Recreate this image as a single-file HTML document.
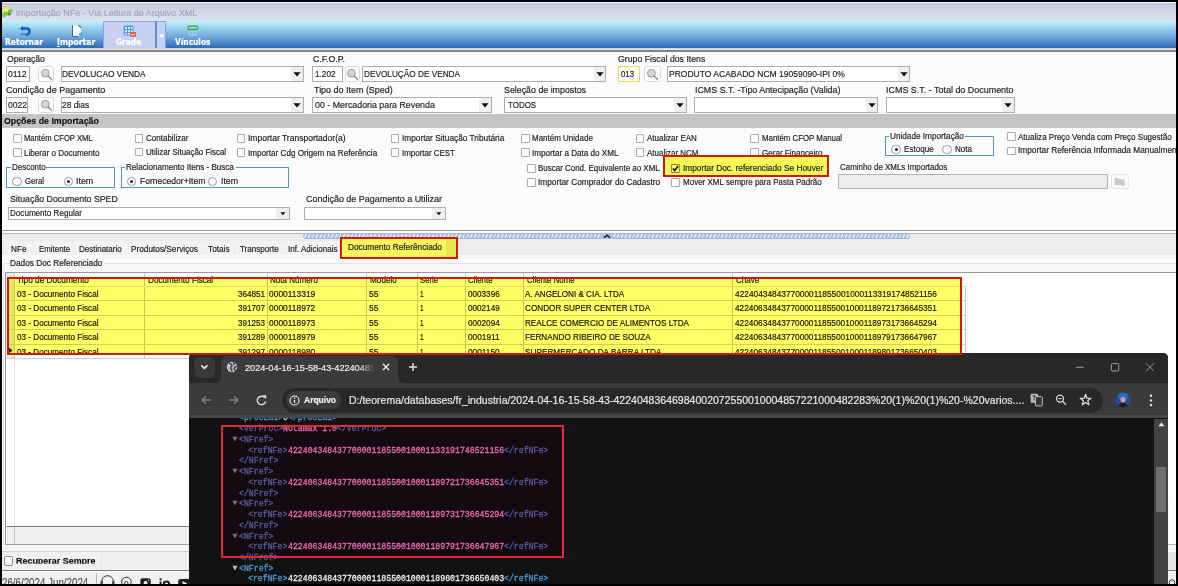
<!DOCTYPE html>
<html lang="pt-BR"><head><meta charset="utf-8"><title>Importação NFe - Via Leitura de Arquivo XML</title>
<style>
html,body{margin:0;padding:0;background:#000}
#root{position:relative;width:1178px;height:586px;overflow:hidden;background:#000}
#root div,#root span.t,#root svg{position:absolute;box-sizing:border-box}
#root div.g{left:0;top:0;width:0;height:0}
#root span.t{display:block;white-space:pre;transform-origin:0 0;-webkit-text-stroke:.18px currentColor}
.in{background:#fff;border:1px solid #adadad}
.cb{background:#fff;border:1px solid #ababab;border-radius:1px}
.rd{background:#fff;border:1px solid #979797;border-radius:50%}
.gb{border:1px solid #4f94cc}
.sb{background:#fdfdfd;border:1px solid #dadada;border-radius:2.5px}
.ab{background:#efefef}
.hl{background:#ffff66;mix-blend-mode:multiply}
.vl{background:#c8c8c8}
.hlx{background:#cfcfcf}

</style></head><body>
<div id="root">
<div class="g" id="app-window">
<div style="left:2px;top:2px;width:1174px;height:582px;background:#fbfbfb"></div>
<div style="left:2px;top:2px;width:1174px;height:19px;background:linear-gradient(#bfcadb,#dfe5f1)"></div>
<svg style="left:2px;top:4px" width="12" height="14" viewBox="0 0 12 14"><rect x="1.4" y="1.2" width="4.5" height="7" rx="1.2" fill="#f2d465"/><rect x="2.2" y="4.4" width="4.6" height="3.4" rx="1.2" fill="#f8e98c"/><ellipse cx="8.1" cy="7.4" rx="2.7" ry="2" fill="#86c436" transform="rotate(-20 8.1 7.4)"/><ellipse cx="7" cy="10" rx="2" ry="1.5" fill="#3f9658"/><ellipse cx="2.8" cy="10.4" rx="3.6" ry="2.1" fill="#8ccc24" transform="rotate(-42 2.8 10.4)"/></svg>
<div style="left:2px;top:2px;width:1174px;height:1.2px;background:#eef2f7"></div>
<span class="t" style="font:400 9px/12px 'Liberation Sans', sans-serif;color:#9fa9b8;left:15.80px;top:7.00px;">Importação NFe - Via Leitura de Arquivo XML</span>
<div style="left:2px;top:21px;width:1174px;height:27px;background:linear-gradient(#c2f2fb 0%,#9ad3ee 25%,#6ea6d8 60%,#3c7ac0 90%,#2d69b4 100%)"></div>
<div style="left:2px;top:48px;width:1174px;height:2px;background:linear-gradient(#c9cfd6,#ececec)"></div>
<div style="left:2px;top:50.4px;width:1174px;height:1.2px;background:#848484"></div>
<div style="left:103px;top:21px;width:63px;height:27px;background:#c6d1f1;border:1px solid #8aa2e0;border-bottom:none"></div>
<div style="left:155.2px;top:21px;width:1.6px;height:27px;background:#6c8ad2"></div>
<svg style="left:17.6px;top:24px" width="16" height="13" viewBox="0 0 16 13"><path d="M3.6 4.5 H9 A3.1 3.1 0 0 1 9 10.6 H7.8" fill="none" stroke="#1659b8" stroke-width="2.3"/><path d="M5 1.9 L1.7 4.5 L5 7.1 Z" fill="#1659b8"/><g fill="#2c68c2"><rect x="2.6" y="9.5" width="1.1" height="1.5"/><rect x="4.3" y="9.5" width="1.1" height="1.5"/><rect x="6" y="9.5" width="1.1" height="1.5"/></g></svg>
<svg style="left:71px;top:23.6px" width="13" height="14" viewBox="0 0 13 14"><path d="M1.6 1.4 H7.2 L10 4.2 V12.2 H1.6 Z" fill="#fdfdfd"/><path d="M1.5 1.4 V12.3 H7.4" fill="none" stroke="#3d5474" stroke-width=".9"/><path d="M7 1.3 L10.1 4.4 L10.1 3 L8.4 1.3 Z" fill="#4a5866"/><circle cx="9.6" cy="10.3" r="1.75" fill="#3f97e2"/><circle cx="9.3" cy="10" r=".6" fill="#bfe2fa"/></svg>
<svg style="left:123px;top:24.5px" width="14" height="13" viewBox="0 0 14 13"><rect x=".6" y=".6" width="10" height="9.8" rx="1.6" fill="#5598da"/><g fill="#cdeefa"><rect x="2" y="2" width="2" height="2"/><rect x="5" y="2" width="2" height="2"/><rect x="8" y="2" width="1.6" height="2"/><rect x="2" y="5" width="2" height="2"/><rect x="5" y="5" width="2" height="2"/><rect x="8" y="5" width="1.6" height="2"/><rect x="2" y="8" width="2" height="1.6"/><rect x="5" y="8" width="2" height="1.6"/></g><rect x="7.2" y="7" width="5.8" height="4.8" rx=".8" fill="#d65a42"/><rect x="8.2" y="8.9" width="3.8" height="1.4" fill="#f6d2bc"/></svg>
<svg style="left:158px;top:34px" width="8" height="5" viewBox="0 0 8 5"><path d="M.6 .6 H6.6 L3.6 4 Z" fill="#fff"/></svg>
<svg style="left:186.5px;top:24.5px" width="12" height="12" viewBox="0 0 12 12"><rect x=".6" y=".6" width="10.6" height="4.6" rx="1" fill="#4aa86a"/><rect x="2" y="2.2" width="7.8" height="1.2" fill="#c8efd2"/><rect x="1.6" y="5.8" width="8.6" height="4.6" rx=".6" fill="#9ccbf0"/><rect x="3" y="7.2" width="2" height="1.8" fill="#7fb2e4"/><rect x="6.6" y="7.2" width="2" height="1.8" fill="#7fb2e4"/></svg>
<span class="t" style="font:700 8.2px/12px 'DejaVu Sans', 'Liberation Sans', sans-serif;color:#fff;left:5.10px;top:36.30px;transform:scaleX(0.9285);">Retornar</span>
<span class="t" style="font:700 8.2px/12px 'DejaVu Sans', 'Liberation Sans', sans-serif;color:#fff;left:57.40px;top:36.30px;transform:scaleX(0.9437);"><u>I</u>mportar</span>
<span class="t" style="font:700 8.2px/12px 'DejaVu Sans', 'Liberation Sans', sans-serif;color:#fff;left:115.90px;top:36.30px;transform:scaleX(0.9096);">Grade</span>
<span class="t" style="font:700 8.2px/12px 'DejaVu Sans', 'Liberation Sans', sans-serif;color:#fff;left:174.70px;top:36.30px;transform:scaleX(0.9108);">Vínculos</span>
</div><div class="g" id="form-header">
<span class="t" style="font:400 9.8px/12px 'Liberation Sans', sans-serif;color:#1c1c1c;left:6.80px;top:53.00px;transform:scaleX(0.8812);">Operação</span>
<span class="t" style="font:400 9.8px/12px 'Liberation Sans', sans-serif;color:#1c1c1c;left:313.00px;top:53.00px;transform:scaleX(0.8907);">C.F.O.P.</span>
<span class="t" style="font:400 9.8px/12px 'Liberation Sans', sans-serif;color:#1c1c1c;left:618.40px;top:53.00px;transform:scaleX(0.8908);">Grupo Fiscal dos Itens</span>
<div class="in" style="left:6.3px;top:66.3px;width:23.6px;height:15.5px;"></div>
<span class="t" style="font:400 9.8px/12px 'Liberation Sans', sans-serif;color:#1c1c1c;left:7.90px;top:67.70px;transform:scaleX(0.8876);">0112</span>
<div class="sb" style="left:38.2px;top:66.3px;width:16.2px;height:16px;"></div>
<svg style="left:39.7px;top:68.3px" width="14" height="13" viewBox="0 0 14 13"><circle cx="5.4" cy="5.2" r="3.9" fill="#cfd7d7" stroke="#858b8b" stroke-width=".8"/><path d="M8.3 8.1 L11.4 11.2" stroke="#7c8282" stroke-width="1.3" stroke-linecap="round"/></svg>
<div class="in" style="left:60.6px;top:66.3px;width:243px;height:15.5px;"></div>
<div class="ab" style="left:291.2px;top:67.3px;width:11.4px;height:13.5px;"></div>
<svg style="left:293.3px;top:72.15px" width="8" height="5" viewBox="0 0 8 5"><path d="M.4 .3 H7.6 L4 4.4 Z" fill="#111"/></svg>
<span class="t" style="font:400 9.8px/12px 'Liberation Sans', sans-serif;color:#1c1c1c;left:62.40px;top:67.70px;transform:scaleX(0.8532);">DEVOLUCAO VENDA</span>
<div class="in" style="left:312px;top:66.3px;width:30.8px;height:15.5px;"></div>
<span class="t" style="font:400 9.8px/12px 'Liberation Sans', sans-serif;color:#1c1c1c;left:314.60px;top:67.70px;transform:scaleX(0.8393);">1.202</span>
<div class="sb" style="left:345px;top:66.3px;width:14.6px;height:16px;"></div>
<svg style="left:345.7px;top:68.3px" width="14" height="13" viewBox="0 0 14 13"><circle cx="5.4" cy="5.2" r="3.9" fill="#cfd7d7" stroke="#858b8b" stroke-width=".8"/><path d="M8.3 8.1 L11.4 11.2" stroke="#7c8282" stroke-width="1.3" stroke-linecap="round"/></svg>
<div class="in" style="left:362px;top:66.3px;width:244px;height:15.5px;"></div>
<div class="ab" style="left:593.6px;top:67.3px;width:11.4px;height:13.5px;"></div>
<svg style="left:595.7px;top:72.15px" width="8" height="5" viewBox="0 0 8 5"><path d="M.4 .3 H7.6 L4 4.4 Z" fill="#111"/></svg>
<span class="t" style="font:400 9.8px/12px 'Liberation Sans', sans-serif;color:#1c1c1c;left:364.20px;top:67.70px;transform:scaleX(0.8398);">DEVOLUÇÃO DE VENDA</span>
<div style="left:618px;top:66.3px;width:22.4px;height:15.5px;background:#fffef4;border:1px solid #e6dc5a"></div>
<span class="t" style="font:400 9.8px/12px 'Liberation Sans', sans-serif;color:#1c1c1c;left:620.50px;top:67.70px;transform:scaleX(0.7990);">013</span>
<div class="sb" style="left:644.4px;top:66.3px;width:16.2px;height:16px;"></div>
<svg style="left:645.9px;top:68.3px" width="14" height="13" viewBox="0 0 14 13"><circle cx="5.4" cy="5.2" r="3.9" fill="#cfd7d7" stroke="#858b8b" stroke-width=".8"/><path d="M8.3 8.1 L11.4 11.2" stroke="#7c8282" stroke-width="1.3" stroke-linecap="round"/></svg>
<div class="in" style="left:667px;top:66.3px;width:243px;height:15.5px;"></div>
<div class="ab" style="left:897.6px;top:67.3px;width:11.4px;height:13.5px;"></div>
<svg style="left:899.7px;top:72.15px" width="8" height="5" viewBox="0 0 8 5"><path d="M.4 .3 H7.6 L4 4.4 Z" fill="#111"/></svg>
<span class="t" style="font:400 9.8px/12px 'Liberation Sans', sans-serif;color:#1c1c1c;left:668.60px;top:67.70px;transform:scaleX(0.8691);">PRODUTO ACABADO NCM 19059090-IPI 0%</span>
<span class="t" style="font:400 9.8px/12px 'Liberation Sans', sans-serif;color:#1c1c1c;left:6.00px;top:83.50px;transform:scaleX(0.9207);">Condição de Pagamento</span>
<span class="t" style="font:400 9.8px/12px 'Liberation Sans', sans-serif;color:#1c1c1c;left:313.50px;top:83.50px;transform:scaleX(0.9133);">Tipo do Item (Sped)</span>
<span class="t" style="font:400 9.8px/12px 'Liberation Sans', sans-serif;color:#1c1c1c;left:503.60px;top:83.50px;transform:scaleX(0.9017);">Seleção de impostos</span>
<span class="t" style="font:400 9.8px/12px 'Liberation Sans', sans-serif;color:#1c1c1c;left:694.70px;top:83.50px;transform:scaleX(0.9055);">ICMS S.T. -Tipo Antecipação (Valida)</span>
<span class="t" style="font:400 9.8px/12px 'Liberation Sans', sans-serif;color:#1c1c1c;left:886.00px;top:83.50px;transform:scaleX(0.9126);">ICMS S.T. - Total do Documento</span>
<div class="in" style="left:6.3px;top:97px;width:21.6px;height:15.5px;"></div>
<span class="t" style="font:400 9.8px/12px 'Liberation Sans', sans-serif;color:#1c1c1c;left:7.90px;top:99.00px;transform:scaleX(0.8714);">0022</span>
<div class="sb" style="left:38.2px;top:97px;width:16.2px;height:16px;"></div>
<svg style="left:39.7px;top:99px" width="14" height="13" viewBox="0 0 14 13"><circle cx="5.4" cy="5.2" r="3.9" fill="#cfd7d7" stroke="#858b8b" stroke-width=".8"/><path d="M8.3 8.1 L11.4 11.2" stroke="#7c8282" stroke-width="1.3" stroke-linecap="round"/></svg>
<div class="in" style="left:60.6px;top:97px;width:243px;height:15.5px;"></div>
<div class="ab" style="left:291.2px;top:98px;width:11.4px;height:13.5px;"></div>
<svg style="left:293.3px;top:102.85px" width="8" height="5" viewBox="0 0 8 5"><path d="M.4 .3 H7.6 L4 4.4 Z" fill="#111"/></svg>
<span class="t" style="font:400 9.8px/12px 'Liberation Sans', sans-serif;color:#1c1c1c;left:62.40px;top:99.00px;transform:scaleX(0.8582);">28 dias</span>
<div class="in" style="left:312px;top:97px;width:179.6px;height:15.5px;"></div>
<div class="ab" style="left:479.2px;top:98px;width:11.4px;height:13.5px;"></div>
<svg style="left:481.3px;top:102.85px" width="8" height="5" viewBox="0 0 8 5"><path d="M.4 .3 H7.6 L4 4.4 Z" fill="#111"/></svg>
<span class="t" style="font:400 9.8px/12px 'Liberation Sans', sans-serif;color:#1c1c1c;left:314.70px;top:99.00px;transform:scaleX(0.9016);">00 - Mercadoria para Revenda</span>
<div class="in" style="left:504.4px;top:97px;width:182.3px;height:15.5px;"></div>
<div class="ab" style="left:674.3px;top:98px;width:11.4px;height:13.5px;"></div>
<svg style="left:676.4px;top:102.85px" width="8" height="5" viewBox="0 0 8 5"><path d="M.4 .3 H7.6 L4 4.4 Z" fill="#111"/></svg>
<span class="t" style="font:400 9.8px/12px 'Liberation Sans', sans-serif;color:#1c1c1c;left:507.50px;top:99.00px;transform:scaleX(0.8114);">TODOS</span>
<div class="in" style="left:693.9px;top:97px;width:184.1px;height:15.5px;"></div>
<div class="ab" style="left:865.6px;top:98px;width:11.4px;height:13.5px;"></div>
<svg style="left:867.7px;top:102.85px" width="8" height="5" viewBox="0 0 8 5"><path d="M.4 .3 H7.6 L4 4.4 Z" fill="#111"/></svg>
<div class="in" style="left:886px;top:97px;width:128.7px;height:15.5px;"></div>
<div class="ab" style="left:1002.3px;top:98px;width:11.4px;height:13.5px;"></div>
<svg style="left:1004.4px;top:102.85px" width="8" height="5" viewBox="0 0 8 5"><path d="M.4 .3 H7.6 L4 4.4 Z" fill="#111"/></svg>
<div style="left:2px;top:113.6px;width:1174px;height:14px;background:#c4c4c4"></div>
<span class="t" style="font:700 9.8px/12px 'Liberation Sans', sans-serif;color:#111;left:3.80px;top:114.80px;transform:scaleX(0.8974);">Opções de Importação</span>
</div><div class="g" id="import-options">
<div class="cb" style="left:13.2px;top:134px;width:8.6px;height:8.6px;"></div>
<span class="t" style="font:400 9.1px/12px 'Liberation Sans', sans-serif;color:#1c1c1c;left:24.00px;top:132.00px;transform:scaleX(0.8398);">Mantém CFOP XML</span>
<div class="cb" style="left:13.2px;top:148.4px;width:8.6px;height:8.6px;"></div>
<span class="t" style="font:400 9.1px/12px 'Liberation Sans', sans-serif;color:#1c1c1c;left:24.40px;top:146.70px;transform:scaleX(0.8885);">Liberar o Documento</span>
<div class="cb" style="left:134.8px;top:134px;width:8.6px;height:8.6px;"></div>
<span class="t" style="font:400 9.1px/12px 'Liberation Sans', sans-serif;color:#1c1c1c;left:145.90px;top:132.00px;transform:scaleX(0.8814);">Contabilizar</span>
<div class="cb" style="left:134.8px;top:147.7px;width:8.6px;height:8.6px;"></div>
<span class="t" style="font:400 9.1px/12px 'Liberation Sans', sans-serif;color:#1c1c1c;left:145.90px;top:146.00px;transform:scaleX(0.8711);">Utilizar Situação Fiscal</span>
<div class="cb" style="left:236.7px;top:134px;width:8.6px;height:8.6px;"></div>
<span class="t" style="font:400 9.1px/12px 'Liberation Sans', sans-serif;color:#1c1c1c;left:248.30px;top:132.00px;transform:scaleX(0.9372);">Importar Transportador(a)</span>
<div class="cb" style="left:236.7px;top:148.4px;width:8.6px;height:8.6px;"></div>
<span class="t" style="font:400 9.1px/12px 'Liberation Sans', sans-serif;color:#1c1c1c;left:248.30px;top:146.70px;transform:scaleX(0.8935);">Importar Cdg Origem na Referência</span>
<div class="cb" style="left:390.6px;top:134px;width:8.6px;height:8.6px;"></div>
<span class="t" style="font:400 9.1px/12px 'Liberation Sans', sans-serif;color:#1c1c1c;left:401.70px;top:132.00px;transform:scaleX(0.9116);">Importar Situação Tributária</span>
<div class="cb" style="left:390.6px;top:148.4px;width:8.6px;height:8.6px;"></div>
<span class="t" style="font:400 9.1px/12px 'Liberation Sans', sans-serif;color:#1c1c1c;left:401.70px;top:146.70px;transform:scaleX(0.8726);">Importar CEST</span>
<div class="cb" style="left:521px;top:134px;width:8.6px;height:8.6px;"></div>
<span class="t" style="font:400 9.1px/12px 'Liberation Sans', sans-serif;color:#1c1c1c;left:532.00px;top:132.00px;transform:scaleX(0.8787);">Mantém Unidade</span>
<div class="cb" style="left:521px;top:148.4px;width:8.6px;height:8.6px;"></div>
<span class="t" style="font:400 9.1px/12px 'Liberation Sans', sans-serif;color:#1c1c1c;left:532.00px;top:146.70px;transform:scaleX(0.8909);">Importar a Data do XML</span>
<div class="cb" style="left:635.5px;top:134px;width:8.6px;height:8.6px;"></div>
<span class="t" style="font:400 9.1px/12px 'Liberation Sans', sans-serif;color:#1c1c1c;left:647.00px;top:132.00px;transform:scaleX(0.8815);">Atualizar EAN</span>
<div class="cb" style="left:635.5px;top:148.4px;width:8.6px;height:8.6px;"></div>
<span class="t" style="font:400 9.1px/12px 'Liberation Sans', sans-serif;color:#1c1c1c;left:647.00px;top:146.70px;transform:scaleX(0.8787);">Atualizar NCM</span>
<div class="cb" style="left:750px;top:134px;width:8.6px;height:8.6px;"></div>
<span class="t" style="font:400 9.1px/12px 'Liberation Sans', sans-serif;color:#1c1c1c;left:761.60px;top:132.00px;transform:scaleX(0.8627);">Mantém CFOP Manual</span>
<div class="cb" style="left:750px;top:148.4px;width:8.6px;height:8.6px;"></div>
<span class="t" style="font:400 9.1px/12px 'Liberation Sans', sans-serif;color:#1c1c1c;left:761.60px;top:146.70px;transform:scaleX(0.8860);">Gerar Financeiro</span>
<div class="cb" style="left:1007px;top:132.4px;width:8.6px;height:8.6px;"></div>
<span class="t" style="font:400 9.1px/12px 'Liberation Sans', sans-serif;color:#1c1c1c;left:1018.00px;top:130.50px;transform:scaleX(0.8842);">Atualiza Preço Venda com Preço Sugestão</span>
<div class="cb" style="left:1007px;top:146.5px;width:8.6px;height:8.6px;"></div>
<span class="t" style="font:400 9.1px/12px 'Liberation Sans', sans-serif;color:#1c1c1c;left:1018.00px;top:144.40px;transform:scaleX(0.9123);">Importar Referência Informada Manualmente</span>
<div class="gb" style="left:885px;top:135.6px;width:109.2px;height:20.8px;"></div>
<div style="left:889.4px;top:132px;width:76px;height:8px;background:#fbfbfb"></div>
<span class="t" style="font:400 9.1px/12px 'Liberation Sans', sans-serif;color:#1c1c1c;left:890.40px;top:129.80px;transform:scaleX(0.9018);">Unidade Importação</span>
<div class="rd" style="left:891.4px;top:145.1px;width:9.4px;height:9.4px;"></div>
<div style="left:894.5px;top:148.2px;width:3.2px;height:3.2px;background:#1a1a1a;border-radius:50%"></div>
<span class="t" style="font:400 9.1px/12px 'Liberation Sans', sans-serif;color:#1c1c1c;left:903.80px;top:143.40px;transform:scaleX(0.8886);">Estoque</span>
<div class="rd" style="left:942.4px;top:145.1px;width:9.4px;height:9.4px;"></div>
<span class="t" style="font:400 9.1px/12px 'Liberation Sans', sans-serif;color:#1c1c1c;left:954.80px;top:143.40px;transform:scaleX(0.8883);">Nota</span>
<div class="cb" style="left:527px;top:164.2px;width:8.6px;height:8.6px;"></div>
<span class="t" style="font:400 9.1px/12px 'Liberation Sans', sans-serif;color:#1c1c1c;left:538.00px;top:161.80px;transform:scaleX(0.8758);">Buscar Cond. Equivalente ao XML</span>
<div class="cb" style="left:527px;top:178px;width:8.6px;height:8.6px;"></div>
<span class="t" style="font:400 9.1px/12px 'Liberation Sans', sans-serif;color:#1c1c1c;left:538.00px;top:175.80px;transform:scaleX(0.9113);">Importar Comprador do Cadastro</span>
<div style="left:663px;top:155.4px;width:165.6px;height:21.2px;background:#f7f758;border:2px solid #cf1a10"></div>
<div class="cb" style="left:671.3px;top:164px;width:8.6px;height:8.6px;background:#f4f462;border-color:#8c8c50"></div>
<svg style="left:671.3px;top:164px" width="9" height="9" viewBox="0 0 9 9"><path d="M1.8 4.4 L3.7 6.5 L7.2 2" fill="none" stroke="#111" stroke-width="1.5"/></svg>
<span class="t" style="font:400 9.1px/12px 'Liberation Sans', sans-serif;color:#1c1c1c;left:682.80px;top:161.80px;transform:scaleX(0.9126);">Importar Doc. referenciado Se Houver</span>
<div class="cb" style="left:671.3px;top:178px;width:8.6px;height:8.6px;"></div>
<span class="t" style="font:400 9.1px/12px 'Liberation Sans', sans-serif;color:#1c1c1c;left:682.80px;top:175.80px;transform:scaleX(0.8818);">Mover XML sempre para Pasta Padrão</span>
<span class="t" style="font:400 9.1px/12px 'Liberation Sans', sans-serif;color:#1c1c1c;left:840.40px;top:160.80px;transform:scaleX(0.8728);">Caminho de XMLs Importados</span>
<div style="left:837.8px;top:174.2px;width:270px;height:14.4px;background:#ececec;border:1px solid #b4b4b4"></div>
<div style="left:1110.8px;top:173.8px;width:17.8px;height:15.6px;background:#fcfcfc;border:1px solid #e4e4e4;border-radius:2.5px"></div>
<svg style="left:1113.5px;top:177px" width="12" height="10" viewBox="0 0 12 10"><path d="M.6 1 H4.2 L5.2 2.2 H10.4 V8 H.6 Z" fill="#c9c9c9"/><circle cx="9" cy="7.2" r="1.9" fill="#bdbdbd" stroke="#e8e8e8" stroke-width=".5"/></svg>
<div class="gb" style="left:6.3px;top:167px;width:108.4px;height:20.6px;"></div>
<div style="left:10.6px;top:163.5px;width:35.6px;height:8px;background:#fbfbfb"></div>
<span class="t" style="font:400 9.1px/12px 'Liberation Sans', sans-serif;color:#1c1c1c;left:11.60px;top:161.30px;transform:scaleX(0.8759);">Desconto</span>
<div class="rd" style="left:12.3px;top:176.5px;width:9.4px;height:9.4px;"></div>
<span class="t" style="font:400 9.1px/12px 'Liberation Sans', sans-serif;color:#1c1c1c;left:25.00px;top:175.00px;transform:scaleX(0.8552);">Geral</span>
<div class="rd" style="left:64px;top:176.5px;width:9.4px;height:9.4px;"></div>
<div style="left:67.1px;top:179.6px;width:3.2px;height:3.2px;background:#1a1a1a;border-radius:50%"></div>
<span class="t" style="font:400 9.1px/12px 'Liberation Sans', sans-serif;color:#1c1c1c;left:76.30px;top:175.00px;transform:scaleX(0.9760);">Item</span>
<div class="gb" style="left:121.2px;top:167px;width:167.6px;height:20.6px;"></div>
<div style="left:125.3px;top:163.5px;width:110.7px;height:8px;background:#fbfbfb"></div>
<span class="t" style="font:400 9.1px/12px 'Liberation Sans', sans-serif;color:#1c1c1c;left:126.30px;top:161.30px;transform:scaleX(0.8891);">Relacionamento Itens - Busca</span>
<div class="rd" style="left:127.1px;top:176.5px;width:9.4px;height:9.4px;"></div>
<div style="left:130.2px;top:179.6px;width:3.2px;height:3.2px;background:#1a1a1a;border-radius:50%"></div>
<span class="t" style="font:400 9.1px/12px 'Liberation Sans', sans-serif;color:#1c1c1c;left:139.60px;top:175.00px;transform:scaleX(0.9387);">Fornecedor+Item</span>
<div class="rd" style="left:208px;top:176.5px;width:9.4px;height:9.4px;"></div>
<span class="t" style="font:400 9.1px/12px 'Liberation Sans', sans-serif;color:#1c1c1c;left:220.50px;top:175.00px;transform:scaleX(0.9643);">Item</span>
<span class="t" style="font:400 9.8px/12px 'Liberation Sans', sans-serif;color:#1c1c1c;left:9.70px;top:193.00px;transform:scaleX(0.8955);">Situação Documento SPED</span>
<div class="in" style="left:8px;top:207px;width:281.6px;height:12.8px;"></div>
<div class="ab" style="left:275.6px;top:208px;width:13px;height:10.8px;"></div>
<svg style="left:279.62px;top:212.116px" width="5.76" height="3.6" viewBox="0 0 8 5"><path d="M.4 .3 H7.6 L4 4.4 Z" fill="#111"/></svg>
<span class="t" style="font:400 9.1px/12px 'Liberation Sans', sans-serif;color:#1c1c1c;left:9.70px;top:206.50px;transform:scaleX(0.8893);">Documento Regular</span>
<span class="t" style="font:400 9.8px/12px 'Liberation Sans', sans-serif;color:#1c1c1c;left:306.00px;top:193.00px;transform:scaleX(0.9149);">Condição de Pagamento a Utilizar</span>
<div class="in" style="left:304px;top:207px;width:142.4px;height:12.8px;"></div>
<div class="ab" style="left:432.4px;top:208px;width:13px;height:10.8px;"></div>
<svg style="left:436.42px;top:212.116px" width="5.76" height="3.6" viewBox="0 0 8 5"><path d="M.4 .3 H7.6 L4 4.4 Z" fill="#111"/></svg>
</div><div class="g" id="tabs">
<div style="left:2px;top:230px;width:1174px;height:1.2px;background:#9c9c9c"></div>
<div style="left:2px;top:231.2px;width:1174px;height:1.6px;background:#fdfdfd"></div>
<div style="left:2px;top:232.8px;width:1174px;height:22.8px;background:#ececec"></div>
<div style="left:4px;top:241.2px;width:336px;height:13.6px;background:#f2f2f2"></div>
<div style="left:2px;top:255.4px;width:1174px;height:8px;background:#fafafa"></div>
<div style="left:2px;top:263px;width:1174px;height:8.6px;background:#f7f7f7"></div>
<div style="left:2px;top:232.6px;width:1174px;height:1px;background:#b4b4b4"></div>
<div style="left:303.2px;top:234px;width:606.8px;height:5px;border-radius:0 0 3px 3px;background:repeating-linear-gradient(115deg,#a3c3ea 0 2.3px,#eaf2fb 2.3px 3.5px);border-bottom:0.8px solid #9cb6d8"></div>
<div style="left:600px;top:234px;width:13.5px;height:5.4px;background:#a8c8f0"></div>
<svg style="left:603.4px;top:234.4px" width="8" height="5" viewBox="0 0 8 5"><path d="M1 3.8 L4 1.2 L7 3.8" fill="none" stroke="#111" stroke-width="1.5"/></svg>
<div style="left:32.7px;top:241.5px;width:1.4px;height:13px;background:linear-gradient(90deg,#e2e2e2,#fbfbfb)"></div>
<div style="left:73.6px;top:241.5px;width:1.4px;height:13px;background:linear-gradient(90deg,#e2e2e2,#fbfbfb)"></div>
<div style="left:125.7px;top:241.5px;width:1.4px;height:13px;background:linear-gradient(90deg,#e2e2e2,#fbfbfb)"></div>
<div style="left:202px;top:241.5px;width:1.4px;height:13px;background:linear-gradient(90deg,#e2e2e2,#fbfbfb)"></div>
<div style="left:234.4px;top:241.5px;width:1.4px;height:13px;background:linear-gradient(90deg,#e2e2e2,#fbfbfb)"></div>
<div style="left:283px;top:241.5px;width:1.4px;height:13px;background:linear-gradient(90deg,#e2e2e2,#fbfbfb)"></div>
<span class="t" style="font:400 9.1px/12px 'Liberation Sans', sans-serif;color:#1a1a1a;left:10.60px;top:242.70px;transform:scaleX(0.8994);">NFe</span>
<span class="t" style="font:400 9.1px/12px 'Liberation Sans', sans-serif;color:#1a1a1a;left:38.90px;top:242.70px;transform:scaleX(0.8680);">Emitente</span>
<span class="t" style="font:400 9.1px/12px 'Liberation Sans', sans-serif;color:#1a1a1a;left:79.40px;top:242.70px;transform:scaleX(0.8790);">Destinatario</span>
<span class="t" style="font:400 9.1px/12px 'Liberation Sans', sans-serif;color:#1a1a1a;left:131.40px;top:242.70px;transform:scaleX(0.9078);">Produtos/Serviços</span>
<span class="t" style="font:400 9.1px/12px 'Liberation Sans', sans-serif;color:#1a1a1a;left:208.20px;top:242.70px;transform:scaleX(0.9088);">Totais</span>
<span class="t" style="font:400 9.1px/12px 'Liberation Sans', sans-serif;color:#1a1a1a;left:240.40px;top:242.70px;transform:scaleX(0.8858);">Transporte</span>
<span class="t" style="font:400 9.1px/12px 'Liberation Sans', sans-serif;color:#1a1a1a;left:288.20px;top:242.70px;transform:scaleX(0.8832);">Inf. Adicionais</span>
<div style="left:339.6px;top:237.2px;width:118.4px;height:21.4px;background:#f5f55c;border:2px solid #cf1a10"></div>
<div style="left:446px;top:239.2px;width:10px;height:17.4px;background:#e6e64e"></div>
<span class="t" style="font:400 9.1px/12px 'Liberation Sans', sans-serif;color:#1a1a1a;left:347.60px;top:240.60px;transform:scaleX(0.9111);">Documento Referênciado</span>
<div style="left:3.4px;top:262.8px;width:1180px;height:290px;border:1px solid #e4e4e4;border-bottom:none;border-right:none"></div>
<div style="left:8.5px;top:259px;width:95px;height:9px;background:#f6f6f6"></div>
<span class="t" style="font:400 9.1px/12px 'Liberation Sans', sans-serif;color:#1a1a1a;left:9.70px;top:256.80px;transform:scaleX(0.9090);">Dados Doc Referenciado</span>
</div><div class="g" id="grid">
<div style="left:5.4px;top:271.6px;width:1176.6px;height:273px;background:#fff;border:1px solid #9c9c9c"></div>
<div style="left:6.4px;top:272.6px;width:8.6px;height:86px;background:#e8e8e8"></div>
<div style="left:14px;top:358.6px;width:1px;height:168px;background:#e4e4e4"></div>
<div style="left:6.4px;top:526.4px;width:1174.6px;height:17.4px;background:#f0f0f0;border-top:1px solid #7c7c7c"></div>
<div style="left:14.3px;top:527px;width:0.9px;height:17px;background:#bdbdbd"></div>
<div class="vl" style="left:14px;top:272.6px;width:1px;height:86px;"></div>
<div class="vl" style="left:143.7px;top:272.6px;width:1px;height:86px;"></div>
<div class="vl" style="left:266.9px;top:272.6px;width:1px;height:86px;"></div>
<div class="vl" style="left:366.2px;top:272.6px;width:1px;height:86px;"></div>
<div class="vl" style="left:416.5px;top:272.6px;width:1px;height:86px;"></div>
<div class="vl" style="left:464.9px;top:272.6px;width:1px;height:86px;"></div>
<div class="vl" style="left:523.2px;top:272.6px;width:1px;height:86px;"></div>
<div class="vl" style="left:732.1px;top:272.6px;width:1px;height:86px;"></div>
<div class="vl" style="left:964.7px;top:287px;width:1px;height:71.6px;"></div>
<div class="hlx" style="left:6.4px;top:286.3px;width:959.8px;height:1px;background:#dedede"></div>
<div class="hlx" style="left:6.4px;top:300.1px;width:959.8px;height:1px;"></div>
<div class="hlx" style="left:6.4px;top:314.7px;width:959.8px;height:1px;"></div>
<div class="hlx" style="left:6.4px;top:329.1px;width:959.8px;height:1px;"></div>
<div class="hlx" style="left:6.4px;top:343.7px;width:959.8px;height:1px;"></div>
<div class="hlx" style="left:6.4px;top:358.1px;width:959.8px;height:1px;"></div>
<span class="t" style="font:400 9.4px/12px 'Liberation Sans', sans-serif;color:#151515;left:17.00px;top:274.30px;transform:scaleX(0.8824);">Tipo de Documento</span>
<span class="t" style="font:400 9.4px/12px 'Liberation Sans', sans-serif;color:#151515;left:147.50px;top:274.30px;transform:scaleX(0.8686);">Documento Fiscal</span>
<span class="t" style="font:400 9.4px/12px 'Liberation Sans', sans-serif;color:#151515;left:270.00px;top:274.30px;transform:scaleX(0.8589);">Nota Número</span>
<span class="t" style="font:400 9.4px/12px 'Liberation Sans', sans-serif;color:#151515;left:369.50px;top:274.30px;transform:scaleX(0.8744);">Modelo</span>
<span class="t" style="font:400 9.4px/12px 'Liberation Sans', sans-serif;color:#151515;left:420.10px;top:274.30px;transform:scaleX(0.8213);">Serie</span>
<span class="t" style="font:400 9.4px/12px 'Liberation Sans', sans-serif;color:#151515;left:468.30px;top:274.30px;transform:scaleX(0.8423);">Cliente</span>
<span class="t" style="font:400 9.4px/12px 'Liberation Sans', sans-serif;color:#151515;left:526.60px;top:274.30px;transform:scaleX(0.8377);">Cliente Nome</span>
<span class="t" style="font:400 9.4px/12px 'Liberation Sans', sans-serif;color:#151515;left:735.70px;top:274.30px;transform:scaleX(0.8555);">Chave</span>
<span class="t" style="font:400 9.4px/12px 'Liberation Sans', sans-serif;color:#151515;left:16.70px;top:287.60px;transform:scaleX(0.8687);">03 - Documento Fiscal</span>
<span class="t" style="font:400 9.4px/12px 'Liberation Sans', sans-serif;color:#151515;left:237.90px;top:287.60px;transform:scaleX(0.8658);">364851</span>
<span class="t" style="font:400 9.4px/12px 'Liberation Sans', sans-serif;color:#151515;left:269.10px;top:287.60px;transform:scaleX(0.8999);">0000113319</span>
<span class="t" style="font:400 9.4px/12px 'Liberation Sans', sans-serif;color:#151515;left:369.00px;top:287.60px;transform:scaleX(0.9105);">55</span>
<span class="t" style="font:400 9.4px/12px 'Liberation Sans', sans-serif;color:#151515;left:419.80px;top:287.60px;transform:scaleX(0.6800);">1</span>
<span class="t" style="font:400 9.4px/12px 'Liberation Sans', sans-serif;color:#151515;left:468.00px;top:287.60px;transform:scaleX(0.8682);">0003396</span>
<span class="t" style="font:400 9.4px/12px 'Liberation Sans', sans-serif;color:#151515;left:525.40px;top:287.60px;transform:scaleX(0.8621);">A. ANGELONI &amp; CIA. LTDA</span>
<span class="t" style="font:400 9.4px/12px 'Liberation Sans', sans-serif;color:#151515;left:734.80px;top:287.60px;transform:scaleX(0.8881);">42240434843770000118550010001133191748521156</span>
<span class="t" style="font:400 9.4px/12px 'Liberation Sans', sans-serif;color:#151515;left:16.70px;top:302.00px;transform:scaleX(0.8687);">03 - Documento Fiscal</span>
<span class="t" style="font:400 9.4px/12px 'Liberation Sans', sans-serif;color:#151515;left:237.90px;top:302.00px;transform:scaleX(0.8658);">391707</span>
<span class="t" style="font:400 9.4px/12px 'Liberation Sans', sans-serif;color:#151515;left:269.10px;top:302.00px;transform:scaleX(0.8999);">0000118972</span>
<span class="t" style="font:400 9.4px/12px 'Liberation Sans', sans-serif;color:#151515;left:369.00px;top:302.00px;transform:scaleX(0.9105);">55</span>
<span class="t" style="font:400 9.4px/12px 'Liberation Sans', sans-serif;color:#151515;left:419.80px;top:302.00px;transform:scaleX(0.6800);">1</span>
<span class="t" style="font:400 9.4px/12px 'Liberation Sans', sans-serif;color:#151515;left:468.00px;top:302.00px;transform:scaleX(0.8682);">0002149</span>
<span class="t" style="font:400 9.4px/12px 'Liberation Sans', sans-serif;color:#151515;left:525.40px;top:302.00px;transform:scaleX(0.8716);">CONDOR SUPER CENTER LTDA</span>
<span class="t" style="font:400 9.4px/12px 'Liberation Sans', sans-serif;color:#151515;left:734.80px;top:302.00px;transform:scaleX(0.8854);">42240634843770000118550010001189721736645351</span>
<span class="t" style="font:400 9.4px/12px 'Liberation Sans', sans-serif;color:#151515;left:16.70px;top:316.60px;transform:scaleX(0.8687);">03 - Documento Fiscal</span>
<span class="t" style="font:400 9.4px/12px 'Liberation Sans', sans-serif;color:#151515;left:237.90px;top:316.60px;transform:scaleX(0.8658);">391253</span>
<span class="t" style="font:400 9.4px/12px 'Liberation Sans', sans-serif;color:#151515;left:269.10px;top:316.60px;transform:scaleX(0.8999);">0000118973</span>
<span class="t" style="font:400 9.4px/12px 'Liberation Sans', sans-serif;color:#151515;left:369.00px;top:316.60px;transform:scaleX(0.9105);">55</span>
<span class="t" style="font:400 9.4px/12px 'Liberation Sans', sans-serif;color:#151515;left:419.80px;top:316.60px;transform:scaleX(0.6800);">1</span>
<span class="t" style="font:400 9.4px/12px 'Liberation Sans', sans-serif;color:#151515;left:468.00px;top:316.60px;transform:scaleX(0.8682);">0002094</span>
<span class="t" style="font:400 9.4px/12px 'Liberation Sans', sans-serif;color:#151515;left:525.40px;top:316.60px;transform:scaleX(0.8660);">REALCE COMERCIO DE ALIMENTOS LTDA</span>
<span class="t" style="font:400 9.4px/12px 'Liberation Sans', sans-serif;color:#151515;left:734.80px;top:316.60px;transform:scaleX(0.8854);">42240634843770000118550010001189731736645294</span>
<span class="t" style="font:400 9.4px/12px 'Liberation Sans', sans-serif;color:#151515;left:16.70px;top:331.00px;transform:scaleX(0.8687);">03 - Documento Fiscal</span>
<span class="t" style="font:400 9.4px/12px 'Liberation Sans', sans-serif;color:#151515;left:237.90px;top:331.00px;transform:scaleX(0.8658);">391289</span>
<span class="t" style="font:400 9.4px/12px 'Liberation Sans', sans-serif;color:#151515;left:269.10px;top:331.00px;transform:scaleX(0.8999);">0000118979</span>
<span class="t" style="font:400 9.4px/12px 'Liberation Sans', sans-serif;color:#151515;left:369.00px;top:331.00px;transform:scaleX(0.9105);">55</span>
<span class="t" style="font:400 9.4px/12px 'Liberation Sans', sans-serif;color:#151515;left:419.80px;top:331.00px;transform:scaleX(0.6800);">1</span>
<span class="t" style="font:400 9.4px/12px 'Liberation Sans', sans-serif;color:#151515;left:468.00px;top:331.00px;transform:scaleX(0.8852);">0001911</span>
<span class="t" style="font:400 9.4px/12px 'Liberation Sans', sans-serif;color:#151515;left:525.40px;top:331.00px;transform:scaleX(0.8708);">FERNANDO RIBEIRO DE SOUZA</span>
<span class="t" style="font:400 9.4px/12px 'Liberation Sans', sans-serif;color:#151515;left:734.80px;top:331.00px;transform:scaleX(0.8854);">42240634843770000118550010001189791736647967</span>
<span class="t" style="font:400 9.4px/12px 'Liberation Sans', sans-serif;color:#151515;left:16.70px;top:345.60px;transform:scaleX(0.8687);">03 - Documento Fiscal</span>
<span class="t" style="font:400 9.4px/12px 'Liberation Sans', sans-serif;color:#151515;left:237.90px;top:345.60px;transform:scaleX(0.8658);">391297</span>
<span class="t" style="font:400 9.4px/12px 'Liberation Sans', sans-serif;color:#151515;left:269.10px;top:345.60px;transform:scaleX(0.8999);">0000118980</span>
<span class="t" style="font:400 9.4px/12px 'Liberation Sans', sans-serif;color:#151515;left:369.00px;top:345.60px;transform:scaleX(0.9105);">55</span>
<span class="t" style="font:400 9.4px/12px 'Liberation Sans', sans-serif;color:#151515;left:419.80px;top:345.60px;transform:scaleX(0.6800);">1</span>
<span class="t" style="font:400 9.4px/12px 'Liberation Sans', sans-serif;color:#151515;left:468.00px;top:345.60px;transform:scaleX(0.8852);">0001150</span>
<span class="t" style="font:400 9.4px/12px 'Liberation Sans', sans-serif;color:#151515;left:525.40px;top:345.60px;transform:scaleX(0.8769);">SUPERMERCADO DA BARRA LTDA</span>
<span class="t" style="font:400 9.4px/12px 'Liberation Sans', sans-serif;color:#151515;left:734.80px;top:345.60px;transform:scaleX(0.8854);">42240634843770000118550010001189801736650403</span>
<svg style="left:7.6px;top:347px" width="5" height="7" viewBox="0 0 5 7"><path d="M.4 .2 L4.4 3.4 L.4 6.6 Z" fill="#111"/></svg>
<div class="hl" style="left:8px;top:278.4px;width:953px;height:74.6px;"></div>
</div><div class="g" id="status-bar">
<div style="left:2px;top:545px;width:1174px;height:6.4px;background:#f4f4f4"></div>
<div style="left:2px;top:551px;width:1174px;height:1px;background:#d4d4d4"></div>
<div style="left:2px;top:552px;width:1174px;height:18px;background:#f0f0f0"></div>
<div style="left:3.6px;top:556px;width:9px;height:9.6px;background:#fdfdfd;border:1px solid #8e8e8e;border-radius:2px"></div>
<div style="left:14px;top:553px;width:86px;height:11.4px;overflow:hidden"></div>
<span class="t" style="font:700 9px/12px 'Liberation Sans', sans-serif;color:#111;left:16.10px;top:554.60px;transform:scaleX(0.9933);clip-path:inset(0 0 2.9px 0);">Recuperar Sempre</span>
<div style="left:100.6px;top:553px;width:1.2px;height:16px;background:linear-gradient(90deg,#c9c9c9,#fff)"></div>
<div style="left:2px;top:570px;width:1174px;height:1.2px;background:#7f7f7f"></div>
<div style="left:2px;top:571.2px;width:1174px;height:13px;background:linear-gradient(#fafafa 0 2px,#f0f0f0 2px)"></div>
<span class="t" style="font:400 12px/12px 'Liberation Sans', sans-serif;color:#555;left:1.50px;top:577.00px;transform:scaleX(0.8128);">26/6/2024 Jun/2024</span>
<div style="left:96.2px;top:573px;width:1px;height:12px;background:#b4b4b4"></div>
<div style="left:97.2px;top:573px;width:1px;height:12px;background:#fdfdfd"></div>
<svg style="left:100px;top:573px" width="90" height="12" viewBox="0 0 90 12"><g fill="none" stroke="#333" stroke-width="1"><path d="M1.6 12 V8.6 A5.9 5.9 0 0 1 13.4 8.6 V12"/><circle cx="26.4" cy="9" r="4.8"/><path d="M24.6 11 Q24.4 8.4 26.4 8.4 Q28.2 8.4 28 11" /></g><rect x=".4" y="8" width="2.6" height="4" fill="#555"/><rect x="12" y="8" width="2.6" height="4" fill="#555"/><rect x="40.4" y="5.2" width="10.3" height="8" rx="2" fill="#1d1d1d"/><circle cx="45.6" cy="10" r="2" fill="#ededed"/><circle cx="48.6" cy="7.2" r=".8" fill="#ededed"/><path d="M60.6 8.4 V12 M64 12 V8.4 M64 10 Q64.4 8.2 67 8.4 Q69.4 8.6 69.4 12" stroke="#1d1d1d" stroke-width="2" fill="none"/><circle cx="60.6" cy="6.4" r="1.1" fill="#1d1d1d"/><rect x="78.2" y="6" width="13" height="8" rx="2.4" fill="#1d1d1d"/><path d="M82.6 8 L87.6 11 L82.6 14 Z" fill="#ededed"/></svg>
</div><div class="g" id="browser-window">
<div style="left:1167px;top:500px;width:9px;height:44.2px;background:linear-gradient(90deg,#ececec,#fff 30%)"></div>
<div style="left:1167px;top:544.2px;width:9px;height:1px;background:#b4b4b4"></div>
<div style="left:1167px;top:550.6px;width:9px;height:19.4px;background:#e5e5e5;border-top:1px solid #fafafa"></div>
<svg style="left:1168px;top:578px" width="8" height="7" viewBox="0 0 8 7"><circle cx="4" cy="4.6" r="2.8" fill="none" stroke="#333" stroke-width="1"/></svg>
<div style="left:189.4px;top:353.2px;width:978.4px;height:230.8px;background:#121212;border-radius:5px 5px 0 0"></div>
<div style="left:189.4px;top:353.2px;width:978.4px;height:30px;background:#282828;border-radius:5px 5px 0 0"></div>
<div style="left:189.4px;top:383px;width:978.4px;height:35.4px;background:#3b3b3b;border-bottom:1px solid #4a4a4a"></div>
<div style="left:194px;top:356.6px;width:21.4px;height:21.4px;background:#3a3a3a;border-radius:6px"></div>
<svg style="left:200px;top:364.3px" width="9" height="6" viewBox="0 0 9 6"><path d="M1.2 1.2 L4.4 4.4 L7.6 1.2" fill="none" stroke="#efefef" stroke-width="1.5"/></svg>
<div style="left:221px;top:356.4px;width:176.6px;height:27px;background:#3b3b3b;border-radius:6px 6px 0 0"></div>
<svg style="left:215px;top:377px" width="6" height="6" viewBox="0 0 6 6"><path d="M6 0 V6 H0 A6 6 0 0 0 6 0 Z" fill="#3b3b3b"/></svg>
<svg style="left:397.6px;top:377px" width="6" height="6" viewBox="0 0 6 6"><path d="M0 0 V6 H6 A6 6 0 0 1 0 0 Z" fill="#3b3b3b"/></svg>
<svg style="left:226.2px;top:361.4px" width="12" height="12" viewBox="0 0 12 12"><circle cx="6" cy="6" r="5.3" fill="#b9bdc5"/><path d="M3.2 2.6 Q6.4 3 5.8 5.2 Q4.2 6 4.8 7.8 Q6.2 8.6 5.8 10.6 M7.6 1.4 Q7.4 3.2 9 3.6 M10.8 5.6 Q8.6 5.6 8.2 7.4 Q8.6 8.8 9.6 9.6" fill="none" stroke="#3b3b3b" stroke-width="1.5"/></svg>
<span class="t" style="font:400 9px/12px 'Liberation Sans', sans-serif;color:#ececec;left:244.50px;top:362.20px;transform:scaleX(1.0141);-webkit-mask-image:linear-gradient(90deg,#000 88%,transparent 100%);mask-image:linear-gradient(90deg,#000 88%,transparent 100%);">2024-04-16-15-58-43-42240483</span>
<svg style="left:381.6px;top:363.2px" width="8" height="8" viewBox="0 0 8 8"><path d="M1 1 L7 7 M7 1 L1 7" stroke="#f2f2f2" stroke-width="1.4"/></svg>
<svg style="left:408px;top:362.4px" width="10" height="10" viewBox="0 0 10 10"><path d="M5 1 V9 M1 5 H9" stroke="#e6e6e6" stroke-width="1.4"/></svg>
<svg style="left:1075px;top:360px" width="82" height="14" viewBox="0 0 82 14"><g fill="none" stroke="#a9a9a9" stroke-width=".9"><path d="M1 7.3 H8.6"/><rect x="36.4" y="3.6" width="7.4" height="7.4" rx="1"/><path d="M71.2 3.4 L78.8 11 M78.8 3.4 L71.2 11"/></g></svg>
<svg style="left:200px;top:394px" width="70" height="12" viewBox="0 0 70 12"><g fill="none" stroke="#858585" stroke-width="1.3"><path d="M11 6 H2.4 M6 2.2 L2.2 6 L6 9.8"/><path d="M29 6 H37.6 M34 2.2 L37.8 6 L34 9.8"/></g><g fill="none" stroke="#dedede" stroke-width="1.4"><path d="M64.6 3.6 A4.2 4.2 0 1 0 65.6 7.4"/></g><path d="M62.4 1.2 H66.2 V5 Z" fill="#dedede"/></svg>
<div style="left:282.4px;top:387.8px;width:820.6px;height:24.8px;background:#282828;border-radius:12.4px"></div>
<div style="left:285.8px;top:390.8px;width:55.6px;height:18.6px;background:#3c3c3c;border-radius:9.3px"></div>
<svg style="left:288.6px;top:394.6px" width="11" height="11" viewBox="0 0 11 11"><circle cx="5.5" cy="5.5" r="4.5" fill="none" stroke="#f0f0f0" stroke-width="1.1"/><path d="M5.5 5 V8" stroke="#f0f0f0" stroke-width="1.2"/><circle cx="5.5" cy="3.3" r=".75" fill="#f0f0f0"/></svg>
<span class="t" style="font:700 9.4px/12px 'Liberation Sans', sans-serif;color:#f4f4f4;left:303.70px;top:394.40px;transform:scaleX(0.9050);">Arquivo</span>
<span class="t" style="font:400 10.4px/12px 'Liberation Sans', sans-serif;color:#e9e9e9;left:348.60px;top:394.60px;transform:scaleX(1.0130);">D:/teorema/databases/fr_industria/2024-04-16-15-58-43-42240483646984002072550010004857221000482283%20(1)%20(1)%20-%20varios....</span>
<svg style="left:1029.6px;top:393px" width="64" height="14" viewBox="0 0 64 14"><rect x=".6" y=".8" width="7.6" height="9" rx="1" fill="#b9b9b9"/><rect x="5.4" y="3.6" width="7" height="9.4" rx="1" fill="#3b3b3b" stroke="#c6c6c6" stroke-width=".9"/><path d="M2.4 3 H6 M4.2 3 V7.4 M7.4 6 H11 M9.2 6 Q9 9.6 7.2 11 M8 8 Q9.4 10.4 11 11" stroke="#2a2a2a" stroke-width=".8" fill="none"/><g fill="none" stroke="#dadada" stroke-width="1.3"><circle cx="30" cy="5.6" r="3.5"/><path d="M32.6 8.2 L36 11.8"/><path d="M28.4 5.6 H31.6" stroke-width="1"/></g><path d="M55.6 1.4 L57 5.2 L61 5.3 L57.8 7.8 L59 11.8 L55.6 9.4 L52.2 11.8 L53.4 7.8 L50.2 5.3 L54.2 5.2 Z" fill="none" stroke="#e2e2e2" stroke-width="1.2" stroke-linejoin="round"/></svg>
<svg style="left:1115px;top:392px" width="16" height="16" viewBox="0 0 16 16"><defs><clipPath id="av"><circle cx="8" cy="8" r="7.6"/></clipPath></defs><circle cx="8" cy="8" r="7.6" fill="#1f4fa0"/><g clip-path="url(#av)"><circle cx="8" cy="4" r="5" fill="#2d66c0"/><ellipse cx="8" cy="15.4" rx="5.2" ry="4.6" fill="#1d1d22"/><ellipse cx="8" cy="7.6" rx="2.5" ry="3" fill="#c9a58c"/><path d="M5.4 6.2 Q8 3 10.6 6.2 Q8 5 5.4 6.2 Z" fill="#7a7a80"/></g></svg>
<svg style="left:1149px;top:394.2px" width="4" height="13" viewBox="0 0 4 13"><g fill="#e4e4e4"><circle cx="2" cy="1.8" r="1.2"/><circle cx="2" cy="6.4" r="1.2"/><circle cx="2" cy="11" r="1.2"/></g></svg>
<div style="left:1154.4px;top:419.4px;width:13.4px;height:164.6px;background:#424242"></div>
<svg style="left:1158px;top:422.4px" width="7" height="5" viewBox="0 0 7 5"><path d="M3.5 .4 L6.6 4.2 H.4 Z" fill="#f2f2f2"/></svg>
<div style="left:1156.2px;top:467.4px;width:9.8px;height:44.8px;background:#6f6f6f"></div>
</div><div class="g" id="xml-view">
<div style="left:221.6px;top:426.4px;width:341.6px;height:131px;background:#140b10"></div>
<span class="t" style="font:400 9.6px/12px 'Liberation Mono', monospace;color:#4f98da;left:239.00px;top:411.60px;transform:scaleX(0.8530);-webkit-text-stroke:.32px currentColor;">&lt;procEmi&gt;</span>
<span class="t" style="font:400 9.6px/12px 'Liberation Mono', monospace;color:#ececec;left:283.21px;top:411.60px;transform:scaleX(0.8519);-webkit-text-stroke:.32px currentColor;">0</span>
<span class="t" style="font:400 9.6px/12px 'Liberation Mono', monospace;color:#4f98da;left:288.12px;top:411.60px;transform:scaleX(0.8531);-webkit-text-stroke:.32px currentColor;">&lt;/procEmi&gt;</span>
<span class="t" style="font:400 9.6px/12px 'Liberation Mono', monospace;color:#5b5ca4;left:239.00px;top:423.32px;transform:scaleX(0.8530);-webkit-text-stroke:.32px currentColor;">&lt;verProc&gt;</span>
<span class="t" style="font:400 9.6px/12px 'Liberation Mono', monospace;color:#ee6db2;left:283.21px;top:423.32px;transform:scaleX(0.8530);-webkit-text-stroke:.32px currentColor;">Notamax 1.0</span>
<span class="t" style="font:400 9.6px/12px 'Liberation Mono', monospace;color:#5b5ca4;left:337.24px;top:423.32px;transform:scaleX(0.8531);-webkit-text-stroke:.32px currentColor;">&lt;/verProc&gt;</span>
<svg style="left:232px;top:436.04px" width="6" height="6" viewBox="0 0 6 6"><path d="M.3 .8 H5.7 L3 5.4 Z" fill="#9a567c"/></svg>
<span class="t" style="font:400 9.6px/12px 'Liberation Mono', monospace;color:#5b5ca4;left:239.00px;top:434.04px;transform:scaleX(0.8529);-webkit-text-stroke:.32px currentColor;">&lt;NFref&gt;</span>
<span class="t" style="font:400 9.6px/12px 'Liberation Mono', monospace;color:#5b5ca4;left:248.40px;top:444.76px;transform:scaleX(0.8531);-webkit-text-stroke:.32px currentColor;">&lt;refNFe&gt;</span>
<span class="t" style="font:400 9.6px/12px 'Liberation Mono', monospace;color:#ee6db2;left:287.70px;top:444.76px;transform:scaleX(0.8532);-webkit-text-stroke:.32px currentColor;">42240434843770000118550010001133191748521156</span>
<span class="t" style="font:400 9.6px/12px 'Liberation Mono', monospace;color:#5b5ca4;left:503.82px;top:444.76px;transform:scaleX(0.8530);-webkit-text-stroke:.32px currentColor;">&lt;/refNFe&gt;</span>
<span class="t" style="font:400 9.6px/12px 'Liberation Mono', monospace;color:#5b5ca4;left:239.00px;top:455.48px;transform:scaleX(0.8531);-webkit-text-stroke:.32px currentColor;">&lt;/NFref&gt;</span>
<svg style="left:232px;top:468.2px" width="6" height="6" viewBox="0 0 6 6"><path d="M.3 .8 H5.7 L3 5.4 Z" fill="#9a567c"/></svg>
<span class="t" style="font:400 9.6px/12px 'Liberation Mono', monospace;color:#5b5ca4;left:239.00px;top:466.20px;transform:scaleX(0.8529);-webkit-text-stroke:.32px currentColor;">&lt;NFref&gt;</span>
<span class="t" style="font:400 9.6px/12px 'Liberation Mono', monospace;color:#5b5ca4;left:248.40px;top:476.92px;transform:scaleX(0.8531);-webkit-text-stroke:.32px currentColor;">&lt;refNFe&gt;</span>
<span class="t" style="font:400 9.6px/12px 'Liberation Mono', monospace;color:#ee6db2;left:287.70px;top:476.92px;transform:scaleX(0.8532);-webkit-text-stroke:.32px currentColor;">42240634843770000118550010001189721736645351</span>
<span class="t" style="font:400 9.6px/12px 'Liberation Mono', monospace;color:#5b5ca4;left:503.82px;top:476.92px;transform:scaleX(0.8530);-webkit-text-stroke:.32px currentColor;">&lt;/refNFe&gt;</span>
<span class="t" style="font:400 9.6px/12px 'Liberation Mono', monospace;color:#5b5ca4;left:239.00px;top:487.64px;transform:scaleX(0.8531);-webkit-text-stroke:.32px currentColor;">&lt;/NFref&gt;</span>
<svg style="left:232px;top:500.36px" width="6" height="6" viewBox="0 0 6 6"><path d="M.3 .8 H5.7 L3 5.4 Z" fill="#9a567c"/></svg>
<span class="t" style="font:400 9.6px/12px 'Liberation Mono', monospace;color:#5b5ca4;left:239.00px;top:498.36px;transform:scaleX(0.8529);-webkit-text-stroke:.32px currentColor;">&lt;NFref&gt;</span>
<span class="t" style="font:400 9.6px/12px 'Liberation Mono', monospace;color:#5b5ca4;left:248.40px;top:509.08px;transform:scaleX(0.8531);-webkit-text-stroke:.32px currentColor;">&lt;refNFe&gt;</span>
<span class="t" style="font:400 9.6px/12px 'Liberation Mono', monospace;color:#ee6db2;left:287.70px;top:509.08px;transform:scaleX(0.8532);-webkit-text-stroke:.32px currentColor;">42240634843770000118550010001189731736645294</span>
<span class="t" style="font:400 9.6px/12px 'Liberation Mono', monospace;color:#5b5ca4;left:503.82px;top:509.08px;transform:scaleX(0.8530);-webkit-text-stroke:.32px currentColor;">&lt;/refNFe&gt;</span>
<span class="t" style="font:400 9.6px/12px 'Liberation Mono', monospace;color:#5b5ca4;left:239.00px;top:519.80px;transform:scaleX(0.8531);-webkit-text-stroke:.32px currentColor;">&lt;/NFref&gt;</span>
<svg style="left:232px;top:532.52px" width="6" height="6" viewBox="0 0 6 6"><path d="M.3 .8 H5.7 L3 5.4 Z" fill="#9a567c"/></svg>
<span class="t" style="font:400 9.6px/12px 'Liberation Mono', monospace;color:#5b5ca4;left:239.00px;top:530.52px;transform:scaleX(0.8529);-webkit-text-stroke:.32px currentColor;">&lt;NFref&gt;</span>
<span class="t" style="font:400 9.6px/12px 'Liberation Mono', monospace;color:#5b5ca4;left:248.40px;top:541.24px;transform:scaleX(0.8531);-webkit-text-stroke:.32px currentColor;">&lt;refNFe&gt;</span>
<span class="t" style="font:400 9.6px/12px 'Liberation Mono', monospace;color:#ee6db2;left:287.70px;top:541.24px;transform:scaleX(0.8532);-webkit-text-stroke:.32px currentColor;">42240634843770000118550010001189791736647967</span>
<span class="t" style="font:400 9.6px/12px 'Liberation Mono', monospace;color:#5b5ca4;left:503.82px;top:541.24px;transform:scaleX(0.8530);-webkit-text-stroke:.32px currentColor;">&lt;/refNFe&gt;</span>
<span class="t" style="font:400 9.6px/12px 'Liberation Mono', monospace;color:#5b5ca4;left:239.00px;top:551.96px;transform:scaleX(0.8531);-webkit-text-stroke:.32px currentColor;">&lt;/NFref&gt;</span>
<svg style="left:232px;top:564.68px" width="6" height="6" viewBox="0 0 6 6"><path d="M.3 .8 H5.7 L3 5.4 Z" fill="#b9b9b9"/></svg>
<span class="t" style="font:400 9.6px/12px 'Liberation Mono', monospace;color:#4f98da;left:239.00px;top:562.68px;transform:scaleX(0.8529);-webkit-text-stroke:.32px currentColor;">&lt;NFref&gt;</span>
<span class="t" style="font:400 9.6px/12px 'Liberation Mono', monospace;color:#4f98da;left:248.40px;top:573.40px;transform:scaleX(0.8531);-webkit-text-stroke:.32px currentColor;">&lt;refNFe&gt;</span>
<span class="t" style="font:400 9.6px/12px 'Liberation Mono', monospace;color:#ececec;left:287.70px;top:573.40px;transform:scaleX(0.8532);-webkit-text-stroke:.32px currentColor;">42240634843770000118550010001189801736650403</span>
<span class="t" style="font:400 9.6px/12px 'Liberation Mono', monospace;color:#4f98da;left:503.82px;top:573.40px;transform:scaleX(0.8530);-webkit-text-stroke:.32px currentColor;">&lt;/refNFe&gt;</span>
<div style="left:189.4px;top:412.8px;width:978.4px;height:5.6px;background:linear-gradient(#3b3b3b 0 40%,#474747 40% 100%)"></div>
<div style="left:220.6px;top:425.4px;width:343.6px;height:133px;border:2.5px solid #e22834"></div>
</div><div class="g" id="frame">
<div style="left:6.8px;top:277.2px;width:955.2px;height:77.6px;border:2.2px solid #cf1a10"></div>
<div style="left:0px;top:0px;width:1178px;height:2px;background:#000"></div>
<div style="left:0px;top:584px;width:1178px;height:2px;background:#000"></div>
<div style="left:0px;top:0px;width:2px;height:586px;background:#000"></div>
<div style="left:1176px;top:0px;width:2px;height:586px;background:#000"></div>
</div>
</div>
</body></html>
